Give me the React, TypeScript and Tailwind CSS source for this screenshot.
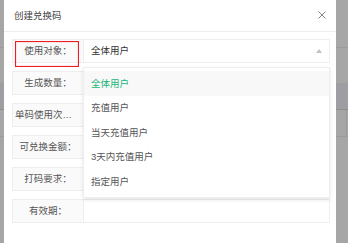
import React from "react";

const font = { fontFamily: '"Liberation Sans", "Noto Sans CJK SC", sans-serif' };

function Row({ label, children, relative }: { label: string; children?: React.ReactNode; relative?: boolean }) {
  return (
    <div className="flex h-[24px] w-[318px] border border-[#eeeeee]">
      <div className="relative flex w-[71px] shrink-0 items-center justify-center border-r border-[#eeeeee] bg-[#fafafa] px-[2px]">
        <span className="block truncate text-[9.5px] leading-[12px] text-[#555]">{label}</span>
      </div>
      <div className={"flex flex-1 items-center bg-white pl-[7px] " + (relative ? "relative" : "")}>{children}</div>
    </div>
  );
}

export default function App() {
  const items = ["全体用户", "充值用户", "当天充值用户", "3天内充值用户", "指定用户"];
  return (
    <div className="relative h-[243px] w-[348px] overflow-hidden bg-[#a6a6a6]" style={font}>
      {/* background page behind the shade */}
      <div className="flex flex-col">
        <div className="h-[48px] border-b border-[#9a9a9a]" />
        <div className="h-[35px]" />
        <div className="h-[27px] border-b border-[#8e8e8e] bg-[#9d9da2]" />
        <div className="flex h-[27px] justify-end border-b border-[#9a9a9a]">
          <div className="w-[2px] border-l border-[#999]" />
        </div>
      </div>

      {/* dialog */}
      <div className="absolute left-[4px] top-0 h-[260px] w-[332px] bg-white">
        <div className="flex h-[32px] items-center justify-between border-b border-[#eeeeee] pl-[10px] pr-[10px]">
          <span className="text-[9.5px] leading-none text-[#444]">创建兑换码</span>
          <svg width="8" height="8" viewBox="0 0 8 8" className="mt-[-1px]">
            <path d="M0.5 0.5 L7.5 7.5 M7.5 0.5 L0.5 7.5" stroke="#777" strokeWidth="0.9" fill="none" />
          </svg>
        </div>
        <div className="flex flex-col gap-[8px] pl-[8px] pt-[7px]">
          <div className="relative">
            <Row label="使用对象：" relative>
              <span className="text-[9.5px] leading-none text-[#333]">全体用户</span>
              <span className="ml-auto mr-[7px] h-0 w-0 border-x-[3.5px] border-b-[4px] border-x-transparent border-b-[#c2c2c2]" />
              {/* dropdown */}
              <div className="absolute left-[-1px] right-[-1px] top-[27px] z-10 border border-[#eeeeee] bg-white py-[3px] shadow-[0_2px_4px_rgba(0,0,0,0.1)]">
                {items.map((it, i) => (
                  <div
                    key={it}
                    className={
                      "flex h-[24.5px] items-center pl-[7px] text-[9.5px] leading-none " +
                      (i === 0 ? "bg-[#f8f8f8] text-[#16b777]" : "text-[#555]")
                    }
                  >
                    {it}
                  </div>
                ))}
              </div>
            </Row>
            <svg className="pointer-events-none absolute left-[3px] top-[2px]" width="64" height="26" viewBox="0 0 64 26">
              <rect x="0.5" y="0.5" width="63" height="25" fill="none" stroke="#ee1c24" strokeWidth="1.2" />
            </svg>
          </div>
          <Row label="生成数量：" />
          <Row label="单码使用次数：" />
          <Row label="可兑换金额：" />
          <Row label="打码要求：" />
          <Row label="有效期：" />
        </div>
      </div>
    </div>
  );
}
